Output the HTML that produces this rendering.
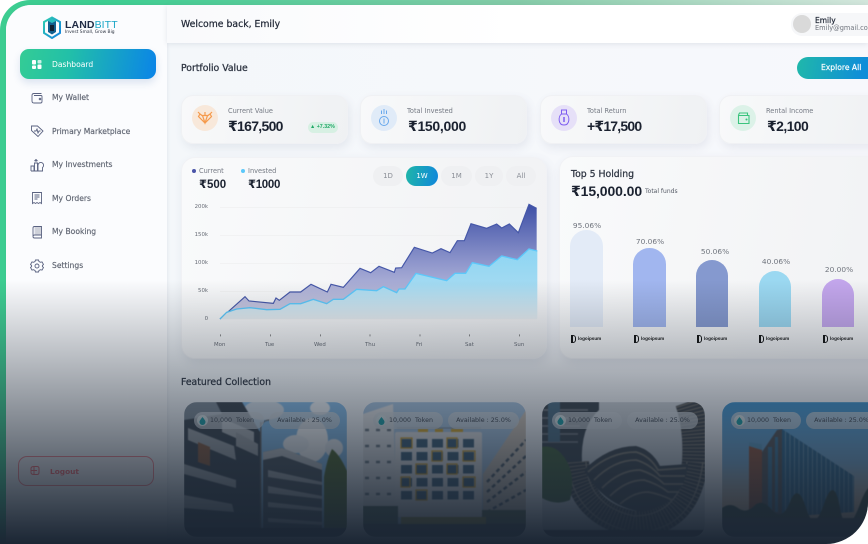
<!DOCTYPE html>
<html><head><meta charset="utf-8"><style>
*{box-sizing:border-box;margin:0;padding:0}
html,body{width:868px;height:544px;overflow:hidden;background:#fff}
body{position:relative;font-family:"DejaVu Sans","Liberation Sans",sans-serif;color:#1d2433}
.a{position:absolute;white-space:nowrap}
.b{font-family:"Liberation Sans","DejaVu Sans",sans-serif;font-weight:700}
#panel{position:absolute;left:0;top:0;width:868px;height:544px;overflow:hidden;border-radius:30px 0 42px 0;background:linear-gradient(90deg,#3dcd91 0,#3dcd91 12%,#85cba8 60%,#d3e6dc 100%);filter:blur(.35px)}
#inner{position:absolute;left:6px;top:5px;width:862px;height:539px;border-radius:25px 0 0 0;background:linear-gradient(90deg,#f3f7fa,#f7f8fc);overflow:hidden}
#greenl{position:absolute;left:0;top:30px;width:6px;height:514px;background:#3dcd91}
#side{position:absolute;left:6px;top:5px;width:161px;height:539px;background:#fbfcfe;border-radius:25px 0 0 0;box-shadow:1px 0 3px rgba(60,70,100,.08)}
#head{position:absolute;left:167px;top:5px;width:701px;height:38px;background:linear-gradient(90deg,#f9fafc,#fff 50%,#fff);box-shadow:0 1px 5px rgba(60,70,100,.12)}
.nav{position:absolute;left:52px;font-size:7.6px;color:#5d6370;line-height:10px;font-weight:400;-webkit-text-stroke:.15px #5d6370}
.ic{position:absolute;left:30px;width:14px;height:14px;fill:none;stroke:#5a6280;stroke-width:.9}
.card{position:absolute;top:95px;height:49px;width:167px;border-radius:12px;background:linear-gradient(100deg,#f8f9fa,#eff1f3);border:1px solid #f0f1f4;box-shadow:2px 4px 9px rgba(70,80,110,.09)}
.circ{position:absolute;top:105px;width:26px;height:26px;border-radius:50%}
.lab{position:absolute;top:107px;font-size:6.6px;color:#757a84;line-height:9px;white-space:nowrap}
.val{position:absolute;top:118px;font-size:14px;line-height:17px;white-space:nowrap;color:#1b2230}
.pill{position:absolute;top:166px;height:20px;border-radius:10px;background:#eff0f2;color:#8a8e96;font-size:7px;line-height:20px;text-align:center}
.ax{position:absolute;font-size:5.4px;color:#666b74;line-height:7px;white-space:nowrap}
.pct{position:absolute;font-size:7.4px;color:#70757e;width:50px;text-align:center;line-height:9px}
.bar{position:absolute;width:32.5px;bottom:217px;border-radius:16.25px 16.25px 0 0}
.lg{position:absolute;top:335px;width:34px;height:8px}
.lg i{position:absolute;left:0;top:0;width:5px;height:7.5px;border:1.6px solid #111;border-radius:0 3px 3px 0;border-left-width:2px}
.lg span{position:absolute;left:7px;top:1px;font:700 4.6px/6px "Liberation Sans",sans-serif;color:#111}
.imgc{position:absolute;top:402px;width:163px;height:135px;border-radius:13px;overflow:hidden}
.imgc svg{display:block;filter:blur(.5px)}
.pt{position:absolute;top:412px;height:17px;border-radius:9px;background:rgba(215,220,226,.72);font-size:6.3px;line-height:17px;color:#3f4650;white-space:nowrap}
.pt b{position:absolute;left:3px;top:3px;width:11px;height:11px;border-radius:50%;background:#dbe6e8}
.pt svg{position:absolute;left:5px;top:4.5px;width:7px;height:8px}
#ov{position:absolute;left:0;top:280px;width:868px;height:264px;background:linear-gradient(180deg,rgba(27,38,52,0),rgba(27,38,52,1))}
</style></head><body>
<div id="panel">
<div id="greenl"></div>
<div id="inner"></div>
<div id="side"></div>
<div id="head"></div>

<!-- logo -->
<svg class="a" style="left:43px;top:16px" width="18" height="23" viewBox="0 0 18 23"><defs><linearGradient id="lg1" x1="0" y1="0" x2="1" y2="1"><stop offset="0" stop-color="#2fd0b0"/><stop offset="1" stop-color="#1280e0"/></linearGradient></defs><path d="M9 1.5 17 6v11l-8 5-8-5V6z" fill="none" stroke="url(#lg1)" stroke-width="2"/><path d="M5 5 9 2.5 13 5v11l-4 2.5-4-2.5z" fill="#12608f"/><path d="M7 9h4v6H7z" fill="#123"/><path d="M5 5l4 2 4-2-4-2.5z" fill="#28c0c0"/></svg>
<div class="a b" style="left:65px;top:19px;font-size:10.5px;line-height:12px;letter-spacing:.1px;color:#1f2a44">LAND<span style="font-weight:400;color:#1aa6c6">BITT</span></div>
<div class="a" style="left:65px;top:30px;font-size:4.4px;line-height:6px;color:#2c3340">Invest Small, Grow Big</div>

<!-- nav -->
<div class="a" style="left:20px;top:49px;width:136px;height:30px;border-radius:9px;background:linear-gradient(100deg,#34cc95 0,#22c0a8 35%,#0a84e8 100%);box-shadow:0 4px 8px rgba(40,90,160,.15)"></div>
<svg class="a" style="left:31px;top:58.5px" width="11" height="11" fill="#fff"><rect x="1" y="1" width="4" height="4.5" rx="1"/><rect x="6.5" y="1" width="4" height="3.5" rx="1" opacity=".75"/><rect x="1" y="6.5" width="4" height="3.5" rx="1"/><rect x="6.5" y="5.5" width="4" height="4.5" rx="1"/></svg>
<div class="nav" style="top:59.5px;color:#fff;-webkit-text-stroke:0">Dashboard</div>

<svg class="ic" style="top:90.5px" viewBox="0 0 14 14"><path d="M2 4.5q0-2 2-2h7.5M2 4.5V10q0 2 2 2h6.5q1.5 0 1.5-1.5V5.5q0-1-1-1H4"/><circle cx="10" cy="8" r=".8"/></svg>
<div class="nav" style="top:93px">My Wallet</div>

<svg class="ic" style="top:124px" viewBox="0 0 14 14"><path d="M1.5 2h6l5.500 5-5 5.500-6.500-6z"/><path d="M4 7l2 0 1-2 1 4 1-2h1.500"/></svg>
<div class="nav" style="top:126.5px">Primary Marketplace</div>

<svg class="ic" style="top:158px" viewBox="0 0 14 14"><path d="M1 13V8h3v5M4.5 13V5h3v8M8 13V7.500a2.800 2.800 0 1 1 4.500 2V13zM1 13h12M6 4V1.500M4.500 3 6 1.500 7.500 3"/></svg>
<div class="nav" style="top:160px">My Investments</div>

<svg class="ic" style="top:191px" viewBox="0 0 14 14"><path d="M2.5 1.500h9v11l-1.500-1-1.500 1-1.500-1-1.500 1-1.500-1-1.500 1z"/><path d="M4.500 4h5M4.500 6h5M4.500 8h3" /></svg>
<div class="nav" style="top:193.5px">My Orders</div>

<svg class="ic" style="top:225px" viewBox="0 0 14 14"><path d="M3 11V3q0-1.500 1.500-1.500h7V10H4.500Q3 10 3 11.500T4.500 13h7v-3"/><path d="M5 2h6v7.500H5z" fill="#4c5570" opacity=".25"/></svg>
<div class="nav" style="top:227px">My Booking</div>

<svg class="ic" style="top:258.5px" viewBox="0 0 14 14"><path d="M5.500 1.500h3l.5 1.500 1.500.8 1.500-.4 1.500 2.600-1.100 1 0 1 1.100 1-1.500 2.600-1.500-.4-1.500.8-.5 1.500h-3l-.5-1.500-1.500-.8-1.500.4L.5 9 1.600 8V7L.5 6 2 3.400l1.500.4L5 3z" transform="translate(0 -.5)"/><circle cx="7" cy="7" r="2"/></svg>
<div class="nav" style="top:261px">Settings</div>

<!-- logout -->
<div class="a" style="left:18px;top:456px;width:136px;height:30px;border-radius:9px;border:1px solid rgba(255,90,100,.7);background:rgba(255,120,130,.04)"></div>
<svg class="a" style="left:30px;top:465px;fill:none;stroke:#ff6a70;stroke-width:1" width="10" height="11"><path d="M4 1.500h3q2 0 2 2v4q0 2-2 2H4q-3 0-3-2v-4q0-2 3-2zM4 1.500v8M1 5.500h6"/></svg>
<div class="a" style="left:50px;top:466.5px;font-size:7.4px;line-height:10px;color:#ff6a70;font-weight:700">Logout</div>

<!-- header -->
<div class="a" style="left:181px;top:19px;font-size:9.3px;line-height:12px;color:#1d2433;-webkit-text-stroke:.2px #1d2433">Welcome back, Emily</div>
<div class="a" style="left:791px;top:13px;width:77px;height:23px;border-radius:11px 0 0 11px;background:#f6f7f9"></div>
<div class="a" style="left:793px;top:15px;width:18px;height:18px;border-radius:50%;background:#d9d9d9"></div>
<div class="a" style="left:815px;top:15.5px;font-size:7.5px;line-height:10px;color:#1d2433;-webkit-text-stroke:.2px #1d2433">Emily</div>
<div class="a" style="left:815px;top:23.5px;font-size:6.6px;line-height:9px;color:#70757e">Emily@gmail.com</div>

<div class="a" style="left:181px;top:62.5px;font-size:9.3px;line-height:12px;color:#2c3340;-webkit-text-stroke:.25px #2c3340">Portfolio Value</div>
<div class="a" style="left:797px;top:57px;width:71px;height:22px;border-radius:11px 0 0 11px;background:linear-gradient(100deg,#20b8aa,#0f8ed8 90%)"></div>
<div class="a" style="left:821px;top:63px;font-size:7.6px;line-height:10px;color:#fff;-webkit-text-stroke:.15px #fff">Explore All</div>

<!-- stat cards -->
<div class="card" style="left:181px"></div>
<div class="card" style="left:360px"></div>
<div class="card" style="left:540px"></div>
<div class="card" style="left:719px"></div>

<div class="circ" style="left:192px;background:#f8e8da"></div>
<svg class="a" style="left:197px;top:110px;fill:none;stroke:#f59a4c;stroke-width:1.2" width="16" height="15"><path d="M3 4l2 1.500h6L13 4l1.500 2.500L8 13 1.500 6.500zM1 2l2 2M15 2l-2 2M8 2v3M5.500 5.500 8 13l2.500-7.500"/></svg>
<div class="circ" style="left:371px;background:#e0ebf8"></div>
<svg class="a" style="left:379px;top:108px;fill:none;stroke:#68a8ec;stroke-width:1" width="10" height="20"><circle cx="5" cy="13" r="4.5"/><path d="M5 1v5M2.500 2.500v3.500M7.500 2.500v3.500M5 10.500v5"/></svg>
<div class="circ" style="left:551px;background:#e6e0f8"></div>
<svg class="a" style="left:557px;top:108px;fill:none;stroke:#7d5cf0;stroke-width:1" width="14" height="20"><path d="M4.500 2h5v4h-5zM4.500 6C1 8.500 1 17 7 17s6-8.500 2.500-11"/><path d="M7 9v5" stroke-width="1.500"/></svg>
<div class="circ" style="left:730px;background:#dcf2e8"></div>
<svg class="a" style="left:737px;top:112px;fill:none;stroke:#3bc47e;stroke-width:1.1" width="13" height="13"><path d="M1.500 3V11.500h10.500V3.500H1.500zM1.500 3 2.500 1H10.500v2.500"/><circle cx="9.500" cy="7.500" r=".5"/></svg>

<div class="lab" style="left:228px">Current Value</div>
<div class="val b" style="left:228px;letter-spacing:-.7px">₹167,500</div>
<div class="a" style="left:308px;top:122px;width:30px;height:11px;border-radius:6px;background:#d7f0e3"></div>
<div class="a b" style="left:310px;top:124px;font-size:5.3px;line-height:7px;color:#1fa866">▲ +7.32%</div>
<div class="lab" style="left:407px">Total Invested</div>
<div class="val b" style="left:408px;letter-spacing:-.3px">₹150,000</div>
<div class="lab" style="left:587px">Total Return</div>
<div class="val b" style="left:587px;letter-spacing:-.8px">+₹17,500</div>
<div class="lab" style="left:766px">Rental Income</div>
<div class="val b" style="left:767px;letter-spacing:-.6px">₹2,100</div>

<!-- chart card -->
<div class="a" style="left:181px;top:157px;width:366px;height:202px;border-radius:14px;background:linear-gradient(100deg,#f9fafb,#f1f2f4);border:1px solid #f1f2f5;box-shadow:2px 4px 10px rgba(70,80,110,.1)"></div>
<div class="a" style="left:192px;top:169px;width:4px;height:4px;border-radius:50%;background:#4a55a8"></div>
<div class="lab" style="left:199px;top:166.5px;color:#757a84">Current</div>
<div class="a" style="left:241px;top:169px;width:4px;height:4px;border-radius:50%;background:#5cc8fa"></div>
<div class="lab" style="left:248px;top:166.5px;color:#757a84">Invested</div>
<div class="a b" style="left:199px;top:178px;font-size:11.5px;line-height:14px;color:#1b2230">₹500</div>
<div class="a b" style="left:248px;top:178px;font-size:11.5px;line-height:14px;color:#1b2230;letter-spacing:-.3px">₹1000</div>
<div class="pill" style="left:373px;width:30px">1D</div>
<div class="pill" style="left:406px;width:32px;color:#fff;background:linear-gradient(100deg,#1fb6a8,#0f86dc)">1W</div>
<div class="pill" style="left:441px;width:31px">1M</div>
<div class="pill" style="left:475px;width:28px">1Y</div>
<div class="pill" style="left:506px;width:30px">All</div>

<svg class="a" style="left:180px;top:195px" width="370" height="165" viewBox="0 0 1110 495">
<defs>
<linearGradient id="d1" gradientUnits="userSpaceOnUse" x1="0" y1="28" x2="0" y2="372"><stop offset="0" stop-color="#3d4fa6"/><stop offset=".5" stop-color="#8d95cb"/><stop offset="1" stop-color="#d6d4e6"/></linearGradient>
<linearGradient id="d2" gradientUnits="userSpaceOnUse" x1="0" y1="162" x2="0" y2="372"><stop offset="0" stop-color="#8cd5f3"/><stop offset=".5" stop-color="#a2daf2"/><stop offset="1" stop-color="#e8eef2"/></linearGradient>
</defs>
<g stroke="#ebebed" stroke-width="1.5"><path d="M120 37H1070M120 121H1070M120 205H1070M120 289H1070M120 372H1070"/></g>
<path fill="url(#d1)" d="M120 372 195 305 207 318 280 325 288 309 298 316 330 291 362 291 393 268 442 291 453 268 490 277 540 220 572 233 597 214 643 232 647 219 665 218 703 157 757 174 783 161 810 173 832 137 853 137 873 86 920 100 950 87 965 99 988 87 1015 113 1047 28 1070 40 1070 372Z"/>
<path fill="none" stroke="#4557a8" stroke-width="3.5" d="M120 372 195 305 207 318 280 325 288 309 298 316 330 291 362 291 393 268 442 291 453 268 490 277 540 220 572 233 597 214 643 232 647 219 665 218 703 157 757 174 783 161 810 173 832 137 853 137 873 86 920 100 950 87 965 99 988 87 1015 113 1047 28 1070 40"/>
<path fill="url(#d2)" d="M120 372 140 352 170 342 210 338 260 344 300 343 330 326 362 326 400 313 440 326 460 313 490 313 530 283 590 287 610 275 650 293 657 282 675 282 708 235 800 257 825 235 857 235 877 203 927 214 965 183 1012 194 1047 162 1072 168 1072 372Z"/>
<path fill="none" stroke="#5cc8fa" stroke-width="4" d="M120 372 140 352 170 342 210 338 260 344 300 343 330 326 362 326 400 313 440 326 460 313 490 313 530 283 590 287 610 275 650 293 657 282 675 282 708 235 800 257 825 235 857 235 877 203 927 214 965 183 1012 194 1047 162 1072 168"/>
<g stroke="#555" stroke-width="2"><path d="M121 418v6M271 418v6M421 418v6M570 418v6M720 418v6M869 418v6M1018 418v6"/></g>
</svg>
<div class="ax" style="right:660px;top:204px">200k</div>
<div class="ax" style="right:660px;top:232px">150k</div>
<div class="ax" style="right:660px;top:260px">100k</div>
<div class="ax" style="right:660px;top:288px">50k</div>
<div class="ax" style="right:660px;top:316px">0</div>
<div class="ax" style="left:214px;top:341.5px">Mon</div>
<div class="ax" style="left:265px;top:341.5px">Tue</div>
<div class="ax" style="left:314px;top:341.5px">Wed</div>
<div class="ax" style="left:365px;top:341.5px">Thu</div>
<div class="ax" style="left:416px;top:341.5px">Fri</div>
<div class="ax" style="left:465px;top:341.5px">Sat</div>
<div class="ax" style="left:514px;top:341.5px">Sun</div>

<!-- top 5 -->
<div class="a" style="left:559px;top:156px;width:330px;height:203px;border-radius:14px;background:linear-gradient(100deg,#f9fafb,#f1f2f4);border:1px solid #f1f2f5;box-shadow:2px 4px 10px rgba(70,80,110,.1)"></div>
<div class="a" style="left:571px;top:168.5px;font-size:9.3px;line-height:12px;color:#2c3340;-webkit-text-stroke:.25px #2c3340">Top 5 Holding</div>
<div class="a b" style="left:571px;top:182.5px;font-size:14px;line-height:17px;color:#1b2230;letter-spacing:-.1px">₹15,000.00</div>
<div class="a" style="left:645px;top:187.5px;font-size:6px;line-height:8px;color:#555b66">Total funds</div>

<div class="pct" style="left:562px;top:221px">95.06%</div>
<div class="pct" style="left:625px;top:237px">70.06%</div>
<div class="pct" style="left:690px;top:247px">50.06%</div>
<div class="pct" style="left:751px;top:257px">40.06%</div>
<div class="pct" style="left:814px;top:265px">20.00%</div>
<div class="bar" style="left:570px;height:97px;background:#e3ebf7"></div>
<div class="bar" style="left:633px;height:79px;background:#a1b6ef"></div>
<div class="bar" style="left:695.5px;height:67px;background:#8599cf"></div>
<div class="bar" style="left:758.5px;height:56px;background:#9bd8f1"></div>
<div class="bar" style="left:821.5px;height:48px;background:#c3a6ec"></div>
<div class="lg" style="left:571px"><i></i><span>logoipsum</span></div>
<div class="lg" style="left:634px"><i></i><span>logoipsum</span></div>
<div class="lg" style="left:697px"><i></i><span>logoipsum</span></div>
<div class="lg" style="left:759px"><i></i><span>logoipsum</span></div>
<div class="lg" style="left:823px"><i></i><span>logoipsum</span></div>

<div class="a" style="left:181px;top:376.5px;font-size:9.3px;line-height:12px;color:#2c3340;-webkit-text-stroke:.25px #2c3340">Featured Collection</div>

<!-- images -->
<div class="imgc" style="left:184px">
<svg width="163" height="135" viewBox="0 0 163 135">
<rect width="163" height="135" fill="#86bdea"/>
<ellipse cx="128" cy="38" rx="16" ry="22" fill="#fff"/><ellipse cx="112" cy="42" rx="13" ry="9" fill="#f4f7fa"/><ellipse cx="136" cy="6" rx="10" ry="7" fill="#f0f4f8"/><ellipse cx="150" cy="46" rx="9" ry="9" fill="#eef2f6"/><ellipse cx="80" cy="8" rx="20" ry="10" fill="#d8e2ec"/>
<path d="M0 0H58L76 30V135H0z" fill="#39424c"/>
<path d="M0 0H32L38 12 0 18z" fill="#7d8a96"/>
<path d="M4 26 50 44 52 58 4 38zM0 62 52 78 52 86 0 72zM0 93 48 102 50 110 0 106z" fill="#9ea3a8"/>
<path d="M14 40 26 45V64L14 60z" fill="#8a5a3c"/>
<path d="M38 16 70 30V44L38 30z" fill="#b0b4b8"/>
<path d="M52 30 74 42V54L52 44z" fill="#a0a4a8"/>
<rect x="76" y="20" width="1.5" height="115" fill="#666"/>
<path d="M78 22q2-4 8-4" stroke="#666" fill="none"/>
<path d="M79 50 98 46 138 62V135H79z" fill="#4b535b"/>
<path d="M79 50 98 46 138 62V68L98 54 79 58z" fill="#c4c7ca"/>
<path d="M84 68l54 12v3l-54-8zM84 84l54 10v3l-54-6zM84 100l54 6v3l-54-4zM84 116l54 4v3l-54-3z" fill="#a8acb0"/>
<path d="M140 135V75q3-18 8-28 8 6 15 22v66z" fill="#4d6428"/>
<rect y="126" width="163" height="9" fill="#22272d"/>
</svg></div>

<div class="imgc" style="left:363px">
<svg width="163" height="135" viewBox="0 0 163 135">
<defs><pattern id="w1" width="15.5" height="13" patternUnits="userSpaceOnUse" x="37" y="36"><rect x="1" y="1" width="11" height="8.5" fill="#3e5f78"/></pattern></defs>
<rect width="163" height="135" fill="#a9c6e2"/>
<path d="M0 12 30 2 34 118H0z" fill="#e3e4e6"/>
<path d="M2 28h28M2 44h28M2 60h28M2 76h28M2 92h28" stroke="#6a7680" stroke-width="2.5" stroke-dasharray="4 7"/>
<path d="M120 72 163 8V122H120z" fill="#cfc4b8"/>
<path d="M124 80 163 38M124 90 163 54M124 100 163 70M124 110 163 88" stroke="#4c5a66" stroke-width="2.5" stroke-dasharray="4 3"/>
<rect x="32" y="30" width="87" height="85" rx="2" fill="#e6e6e7"/>
<rect x="37" y="36" width="78" height="65" fill="url(#w1)"/>
<path d="M55 27h10v3H55zM72 27h8v3h-8zM88 27h12v3H88z" fill="#d8a828"/>
<path d="M34 26H118" stroke="#555" stroke-width=".6"/>
<g fill="none" stroke="#d8a020" stroke-width="1.2"><rect x="38" y="36" width="11" height="10"/><rect x="84" y="36" width="10" height="10"/><rect x="69" y="49" width="10" height="10"/><rect x="100" y="49" width="12" height="10"/><rect x="53" y="62" width="11" height="10"/><rect x="84" y="62" width="10" height="10"/><rect x="38" y="75" width="9" height="10"/><rect x="100" y="75" width="12" height="10"/><rect x="53" y="88" width="11" height="10"/></g>
<path d="M0 104h35v18H0z" fill="#4e6450"/>
<path d="M119 108h44v15h-44z" fill="#58684a"/>
<path d="M38 115h85v8H38z" fill="#a89a30"/>
<rect y="122" width="163" height="13" fill="#3a3f44"/>
</svg></div>

<div class="imgc" style="left:542px">
<svg width="163" height="135" viewBox="0 0 163 135">
<rect width="163" height="135" fill="#cfd4da"/>
<path d="M0 0H57V8Q38 25 40 62L34 92Q16 62 0 50z" fill="#3a434c"/>
<path d="M0 8H46M0 16H40M0 24H38M0 32H36M0 40H36" stroke="#7c8088" stroke-width="1.5"/>
<path d="M6 0H18V40H6z" fill="#4d6f86"/>
<path d="M34 60Q38 112 92 122 146 122 153 60 155 26 146 0" fill="none" stroke="#3e4349" stroke-width="26"/>
<path d="M34 60Q38 112 92 122 146 122 153 60 155 26 146 0" fill="none" stroke="#827c72" stroke-width="26" stroke-dasharray="1 2.5"/>
<path d="M26 66Q36 120 92 130 152 130 161 60M44 60Q46 104 92 114 138 114 145 60" fill="none" stroke="#8e887e" stroke-width="1.2"/>
<path d="M42 68Q66 44 94 44 110 48 118 64L146 62Q142 102 100 110 62 104 42 68z" fill="#3f464d"/>
<path d="M46 70Q68 50 94 50 108 54 116 68L144 66M52 78Q72 58 94 58 108 62 118 74L143 74M60 86Q78 68 98 68 112 72 122 82L141 82M68 94Q84 78 102 78 116 82 126 90L137 90M78 102Q92 90 106 90 118 92 130 98" fill="none" stroke="#8a8478" stroke-width="1.8"/>
<path d="M0 45Q14 42 24 58 34 74 28 98 14 104 0 96z" fill="#43633a"/>
<rect y="128" width="163" height="7" fill="#2a3038"/>
</svg></div>

<div class="imgc" style="left:722px;width:163px">
<svg width="163" height="135" viewBox="0 0 163 135">
<defs><linearGradient id="sk" x1="0" y1="0" x2="0" y2="1"><stop offset="0" stop-color="#3f94d0"/><stop offset=".45" stop-color="#7cb0d8"/><stop offset=".75" stop-color="#d8c0a8"/></linearGradient>
<pattern id="g1" width="4.5" height="6" patternUnits="userSpaceOnUse"><rect width="4.5" height="6" fill="#2e6890"/><rect width=".9" height="6" fill="#6f9cb8"/></pattern></defs>
<rect width="163" height="135" fill="url(#sk)"/>
<path d="M27 44 40 48V112H27z" fill="#95553a"/>
<path d="M27 40l13 2v6l-13-4z" fill="#5fa0c8"/>
<path d="M40 50 55 28 60 27V115H40z" fill="#565658"/>
<path d="M46 45h4v65h-4zM53 35h3v75h-3z" fill="#3e7aa0"/>
<path d="M60 27 132 74V110L60 115z" fill="url(#g1)"/>
<path d="M0 106q8-6 16 0t16-2 18 4 18-8 16 6 18-4 16 4 20-4 25 2v31H0z" fill="#33473a"/>
<rect y="116" width="163" height="19" fill="#3d4650"/>
</svg></div>

<div class="pt" style="left:194px;width:70px;padding-left:16px"><b></b><svg viewBox="0 0 7 8"><path d="M3.500 0C5 2 6.500 3.500 6.500 5a3 3 0 0 1-6 0C.5 3.500 2 2 3.500 0z" fill="#1aa0a8"/></svg>10,000&nbsp; Token</div>
<div class="pt" style="left:269px;width:71px;text-align:center">Available : 25.0%</div>
<div class="pt" style="left:373px;width:70px;padding-left:16px"><b></b><svg viewBox="0 0 7 8"><path d="M3.500 0C5 2 6.500 3.500 6.500 5a3 3 0 0 1-6 0C.5 3.500 2 2 3.500 0z" fill="#1aa0a8"/></svg>10,000&nbsp; Token</div>
<div class="pt" style="left:448px;width:71px;text-align:center">Available : 25.0%</div>
<div class="pt" style="left:552px;width:70px;padding-left:16px"><b></b><svg viewBox="0 0 7 8"><path d="M3.500 0C5 2 6.500 3.500 6.500 5a3 3 0 0 1-6 0C.5 3.500 2 2 3.500 0z" fill="#1aa0a8"/></svg>10,000&nbsp; Token</div>
<div class="pt" style="left:627px;width:71px;text-align:center">Available : 25.0%</div>
<div class="pt" style="left:731px;width:70px;padding-left:16px"><b></b><svg viewBox="0 0 7 8"><path d="M3.500 0C5 2 6.500 3.500 6.500 5a3 3 0 0 1-6 0C.5 3.500 2 2 3.500 0z" fill="#1aa0a8"/></svg>10,000&nbsp; Token</div>
<div class="pt" style="left:806px;width:71px;text-align:center">Available : 25.0%</div>

<div id="ov"></div>
</div>
</body></html>
